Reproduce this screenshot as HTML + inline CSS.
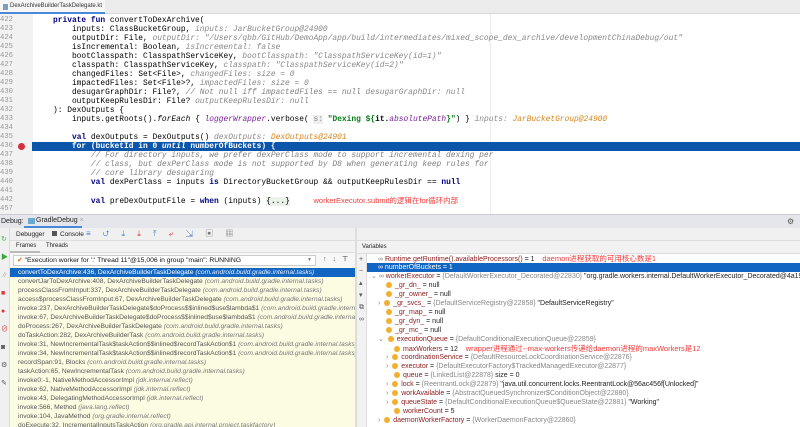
<!DOCTYPE html>
<html><head><meta charset="utf-8"><style>
*{margin:0;padding:0;box-sizing:border-box}
body{width:800px;height:427px;overflow:hidden;background:#fff;position:relative;font-family:"Liberation Sans","Noto Sans CJK SC",sans-serif}
.a{position:absolute;white-space:nowrap}
.code{font-family:"Liberation Mono",monospace;font-size:7.9px;line-height:9px;color:#000}
.ln{position:absolute;left:0;width:20px;text-align:left;font-family:"Liberation Mono",monospace;font-size:7.2px;color:#999;line-height:9px}
.k{color:#000080;font-weight:bold}
.h{color:#888;font-style:italic}
.o{color:#d8861c;font-style:italic}
.p{color:#7a1e9c;font-style:italic}
.c{color:#808080;font-style:italic}
.s{color:#067d17;font-weight:bold}
.r{color:#f23a3a;font-family:"Liberation Sans","Noto Sans CJK SC",sans-serif;font-size:7.5px}
.fr{font-size:6.7px;line-height:9px;color:#555;left:8px}
.fr i{color:#777}
.v{font-size:7px;line-height:9px;color:#222}
.v b{font-weight:normal;color:#8b1a1a}
.v i{font-style:normal;color:#888}
.ic{display:inline-block;width:6px;height:6px;border-radius:50%;background:#f0b030;vertical-align:-1px;margin-right:3px}
</style></head><body>
<div class="a" style="left:0;top:0;width:800px;height:14px;background:#ececec;border-bottom:1px solid #d8d8d8"></div>
<div class="a" style="left:0;top:0;width:105px;height:14px;background:#f7f7f7;border-bottom:2px solid #4a88d8;font-size:6px;line-height:13px;padding-left:10px;color:#333">DexArchiveBuilderTaskDelegate.kt</div>
<div class="a" style="left:3px;top:4px;width:5px;height:6px;background:#7aa0c0"></div>
<div class="a" style="left:0;top:14px;width:33px;height:200px;background:#f2f2f2"></div>
<div class="a" style="left:490px;top:14px;width:1px;height:200px;background:#ececec"></div>
<div class="a" style="left:32px;top:142px;width:768px;height:9px;background:#0b56aa"></div>
<div class="a" style="left:18px;top:143px;width:7px;height:7px;border-radius:50%;background:#d8303a"></div>
<div class="ln" style="top:16px">422<br>423<br>424<br>425<br>426<br>427<br>428<br>429<br>430<br>431<br>432<br>433<br>434<br>435<br>436<br>437<br>438<br>439<br>440<br>441<br>442<br>457</div>
<div class="a code" style="left:53px;top:16px">
<span class="k">private fun</span> convertToDexArchive(<br>
&nbsp;&nbsp;&nbsp;&nbsp;inputs: ClassBucketGroup,  <span class="h">inputs: JarBucketGroup@24900</span><br>
&nbsp;&nbsp;&nbsp;&nbsp;outputDir: File,  <span class="h">outputDir: "/Users/qbb/GitHub/DemoApp/app/build/intermediates/mixed_scope_dex_archive/developmentChinaDebug/out"</span><br>
&nbsp;&nbsp;&nbsp;&nbsp;isIncremental: Boolean,  <span class="h">isIncremental: false</span><br>
&nbsp;&nbsp;&nbsp;&nbsp;bootClasspath: ClasspathServiceKey,  <span class="h">bootClasspath: "ClasspathServiceKey(id=1)"</span><br>
&nbsp;&nbsp;&nbsp;&nbsp;classpath: ClasspathServiceKey,  <span class="h">classpath: "ClasspathServiceKey(id=2)"</span><br>
&nbsp;&nbsp;&nbsp;&nbsp;changedFiles: Set&lt;File&gt;,  <span class="h">changedFiles:  size = 0</span><br>
&nbsp;&nbsp;&nbsp;&nbsp;impactedFiles: Set&lt;File&gt;?,  <span class="h">impactedFiles:  size = 0</span><br>
&nbsp;&nbsp;&nbsp;&nbsp;desugarGraphDir: File?, <span class="c">// Not null iff impactedFiles == null</span>  <span class="h">desugarGraphDir: null</span><br>
&nbsp;&nbsp;&nbsp;&nbsp;outputKeepRulesDir: File?  <span class="h">outputKeepRulesDir: null</span><br>
): DexOutputs {<br>
&nbsp;&nbsp;&nbsp;&nbsp;inputs.getRoots().<i>forEach</i> { <span class="p">loggerWrapper</span>.verbose( <span style="background:#eee;color:#888">s:</span> <span class="s">"Dexing ${</span><b>it.</b><span class="p">absolutePath</span><span class="s">}"</span>) }  <span class="h">inputs: </span><span class="o">JarBucketGroup@24900</span><br>
<br>
&nbsp;&nbsp;&nbsp;&nbsp;<span class="k">val</span> dexOutputs = DexOutputs()  <span class="h">dexOutputs: </span><span class="o">DexOutputs@24901</span><br>
<span style="color:#fff;font-weight:bold">&nbsp;&nbsp;&nbsp;&nbsp;for (bucketId in 0 <i>until</i> numberOfBuckets) {</span><br>
&nbsp;&nbsp;&nbsp;&nbsp;&nbsp;&nbsp;&nbsp;&nbsp;<span class="c">// For directory inputs, we prefer dexPerClass mode to support incremental dexing per</span><br>
&nbsp;&nbsp;&nbsp;&nbsp;&nbsp;&nbsp;&nbsp;&nbsp;<span class="c">// class, but dexPerClass mode is not supported by D8 when generating keep rules for</span><br>
&nbsp;&nbsp;&nbsp;&nbsp;&nbsp;&nbsp;&nbsp;&nbsp;<span class="c">// core library desugaring</span><br>
&nbsp;&nbsp;&nbsp;&nbsp;&nbsp;&nbsp;&nbsp;&nbsp;<span class="k">val</span> dexPerClass = inputs <span class="k">is</span> DirectoryBucketGroup &amp;&amp; outputKeepRulesDir == <span class="k">null</span><br>
<br>
&nbsp;&nbsp;&nbsp;&nbsp;&nbsp;&nbsp;&nbsp;&nbsp;<span class="k">val</span> preDexOutputFile = <span class="k">when</span> (inputs) <span style="background:#eaf2ea">{...}</span>&nbsp;&nbsp;&nbsp;&nbsp; <span class="r">workerExecutor.submit的逻辑在for循环内部</span>
</div>
<div class="a" style="left:0;top:214px;width:800px;height:14px;background:#e4e6eb;border-top:1px solid #ccc;font-size:7px;line-height:13px;color:#222;padding-left:1px">Debug:</div>
<div class="a" style="left:24px;top:215px;width:58px;height:13px;border-bottom:2px solid #4a88d8;font-size:7px;line-height:12px;padding-left:12px;color:#222">GradleDebug <span style="color:#aaa">×</span></div>
<div class="a" style="left:28px;top:218px;width:7px;height:6px;background:#6aa8d0"></div>
<div class="a" style="left:787px;top:217px;font-size:8px;color:#555">⚙</div>
<div class="a" style="left:0;top:228px;width:800px;height:13px;background:#f0f0f0;border-bottom:1px solid #ddd"></div>
<div class="a" style="left:16px;top:230px;font-size:6.5px;line-height:10px;color:#222">Debugger</div>
<div class="a" style="left:52px;top:230px;font-size:6.5px;line-height:10px;color:#222"><span style="display:inline-block;width:5px;height:5px;background:#555;margin-right:3px"></span>Console</div>
<div class="a" style="left:86px;top:229px;font-size:8px;line-height:10px;color:#4a78c0;letter-spacing:5px">≡ ⮍ ⤓ <span style="color:#d03030">⤓</span> ⤒ <span style="color:#d03030">⤶</span> ⇲ <span style="color:#777">▣ ▦</span></div>
<div class="a" style="left:0;top:228px;width:10px;height:199px;background:#f0f0f0;border-right:1px solid #ddd"></div>
<div class="a" style="left:1px;top:231px;font-size:7px;line-height:18px;color:#4a4">↻<br><span style="color:#3a3">▶</span><br><span style="color:#aaa">∥</span><br><span style="color:#d33">■</span><br><span style="color:#d33">●</span><br><span style="color:#d33">⊘</span><br><span style="color:#555">◙</span><br><span style="color:#555">⚙</span><br><span style="color:#555">✎</span></div>
<div class="a" style="left:10px;top:241px;width:347px;height:12px;background:#f2f2f2;border-bottom:1px solid #ddd"></div>
<div class="a" style="left:10px;top:241px;width:30px;height:12px;border-bottom:2px solid #bbb;font-size:6px;line-height:11px;padding-left:6px;color:#222">Frames</div>
<div class="a" style="left:46px;top:241px;font-size:6px;line-height:11px;color:#222">Threads</div>
<div class="a" style="left:10px;top:253px;width:347px;height:14px;background:#f7f7f7"></div>
<div class="a" style="left:13px;top:255px;width:303px;height:11px;background:#fff;border:1px solid #ccc;font-size:6.8px;line-height:9px;padding-left:3px;color:#111"><span style="color:#e06a20">✔</span> "Execution worker for ':' Thread 11"@15,006 in group "main": RUNNING<span style="position:absolute;right:3px;color:#777;font-size:5px">▼</span></div>
<div class="a" style="left:323px;top:255px;font-size:7px;color:#666;letter-spacing:6px">↑↓<b>⊤</b></div>
<div class="a" style="left:10px;top:267px;width:345px;height:160px;background:#fcfce3;overflow:hidden">
<div class="a" style="left:0;top:1px;width:345px;height:9px;background:#1166c4"></div>
<div class="a fr" style="top:1px;color:#fff">convertToDexArchive:436, DexArchiveBuilderTaskDelegate <i style="color:#e8eefc">(com.android.build.gradle.internal.tasks)</i></div>
<div class="a fr" style="top:10px">convertJarToDexArchive:408, DexArchiveBuilderTaskDelegate <i>(com.android.build.gradle.internal.tasks)</i><br>
processClassFromInput:337, DexArchiveBuilderTaskDelegate <i>(com.android.build.gradle.internal.tasks)</i><br>
access$processClassFromInput:67, DexArchiveBuilderTaskDelegate <i>(com.android.build.gradle.internal.tasks)</i><br>
invoke:237, DexArchiveBuilderTaskDelegate$doProcess$$inlined$use$lambda$1 <i>(com.android.build.gradle.internal.tasks)</i><br>
invoke:67, DexArchiveBuilderTaskDelegate$doProcess$$inlined$use$lambda$1 <i>(com.android.build.gradle.internal.tasks)</i><br>
doProcess:267, DexArchiveBuilderTaskDelegate <i>(com.android.build.gradle.internal.tasks)</i><br>
doTaskAction:282, DexArchiveBuilderTask <i>(com.android.build.gradle.internal.tasks)</i><br>
invoke:31, NewIncrementalTask$taskAction$$inlined$recordTaskAction$1 <i>(com.android.build.gradle.internal.tasks)</i><br>
invoke:34, NewIncrementalTask$taskAction$$inlined$recordTaskAction$1 <i>(com.android.build.gradle.internal.tasks)</i><br>
recordSpan:91, Blocks <i>(com.android.build.gradle.internal.tasks)</i><br>
taskAction:65, NewIncrementalTask <i>(com.android.build.gradle.internal.tasks)</i><br>
invoke0:-1, NativeMethodAccessorImpl <i>(jdk.internal.reflect)</i><br>
invoke:62, NativeMethodAccessorImpl <i>(jdk.internal.reflect)</i><br>
invoke:43, DelegatingMethodAccessorImpl <i>(jdk.internal.reflect)</i><br>
invoke:566, Method <i>(java.lang.reflect)</i><br>
invoke:104, JavaMethod <i>(org.gradle.internal.reflect)</i><br>
doExecute:32, IncrementalInputsTaskAction <i>(org.gradle.api.internal.project.taskfactory)</i></div>
</div>
<div class="a" style="left:355px;top:228px;width:2px;height:199px;background:#ddd"></div>
<div class="a" style="left:357px;top:241px;width:443px;height:13px;background:#f2f2f2;border-bottom:1px solid #ddd;font-size:6px;line-height:12px;padding-left:5px;color:#222">Variables</div>
<div class="a" style="left:357px;top:254px;width:10px;height:173px;background:#f2f2f2;border-right:1px solid #ddd;font-size:7px;line-height:12px;color:#555;padding-left:2px">+<br>−<br>▴<br>▾<br>⧉<br>∞</div>
<div class="a" style="left:367px;top:263px;width:433px;height:9px;background:#1166c4"></div>
<div class="a v" style="left:378px;top:254px"><i>∞</i> <b>Runtime.getRuntime().availableProcessors()</b> = 1 &nbsp;&nbsp;&nbsp;<span class="r">daemon进程获取的可用核心数是1</span></div>
<div class="a v" style="left:378px;top:263px;color:#fff">∞ numberOfBuckets = 1</div>
<div class="a v" style="left:371px;top:272px"><i>⌄</i> <i>∞</i> <b>workerExecutor</b> = <i>{DefaultWorkerExecutor_Decorated@22830}</i> "org.gradle.workers.internal.DefaultWorkerExecutor_Decorated@4a195968"</div>
<div class="a v" style="left:386px;top:281px"><span class="ic"></span><b>_gr_dn_</b> = null</div>
<div class="a v" style="left:386px;top:290px"><span class="ic"></span><b>_gr_owner_</b> = null</div>
<div class="a v" style="left:378px;top:299px"><i>›</i>&nbsp; <span class="ic"></span><b>_gr_svcs_</b> = <i>{DefaultServiceRegistry@22858}</i> "DefaultServiceRegistry"</div>
<div class="a v" style="left:386px;top:308px"><span class="ic"></span><b>_gr_map_</b> = null</div>
<div class="a v" style="left:386px;top:317px"><span class="ic"></span><b>_gr_dyn_</b> = null</div>
<div class="a v" style="left:386px;top:326px"><span class="ic"></span><b>_gr_mc_</b> = null</div>
<div class="a v" style="left:378px;top:335px"><i>⌄</i>&nbsp; <span class="ic"></span><b>executionQueue</b> = <i>{DefaultConditionalExecutionQueue@22859}</i></div>
<div class="a v" style="left:394px;top:344px"><span class="ic"></span><b>maxWorkers</b> = 12 &nbsp;&nbsp;&nbsp;<span class="r">wrapper进程通过--max-workers传递给daemon进程的maxWorkers是12</span></div>
<div class="a v" style="left:386px;top:353px"><i>›</i>&nbsp; <span class="ic"></span><b>coordinationService</b> = <i>{DefaultResourceLockCoordinationService@22876}</i></div>
<div class="a v" style="left:386px;top:362px"><i>›</i>&nbsp; <span class="ic"></span><b>executor</b> = <i>{DefaultExecutorFactory$TrackedManagedExecutor@22877}</i></div>
<div class="a v" style="left:394px;top:371px"><span class="ic"></span><b>queue</b> = <i>{LinkedList@22878}</i>  size = 0</div>
<div class="a v" style="left:386px;top:380px"><i>›</i>&nbsp; <span class="ic"></span><b>lock</b> = <i>{ReentrantLock@22879}</i> "java.util.concurrent.locks.ReentrantLock@56ac456f[Unlocked]"</div>
<div class="a v" style="left:386px;top:389px"><i>›</i>&nbsp; <span class="ic"></span><b>workAvailable</b> = <i>{AbstractQueuedSynchronizer$ConditionObject@22880}</i></div>
<div class="a v" style="left:386px;top:398px"><i>›</i>&nbsp; <span class="ic"></span><b>queueState</b> = <i>{DefaultConditionalExecutionQueue$QueueState@22881}</i> "Working"</div>
<div class="a v" style="left:394px;top:407px"><span class="ic"></span><b>workerCount</b> = 5</div>
<div class="a v" style="left:378px;top:416px"><i>›</i>&nbsp; <span class="ic"></span><b>daemonWorkerFactory</b> = <i>{WorkerDaemonFactory@22860}</i></div>
</body></html>
